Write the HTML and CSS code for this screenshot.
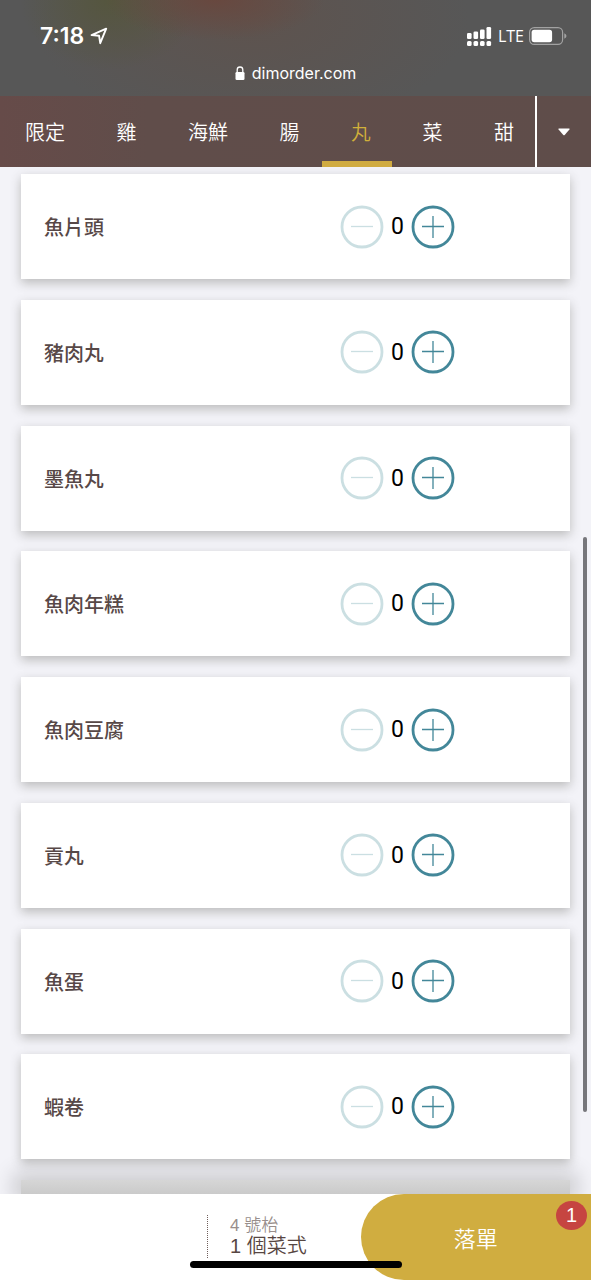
FILE: index.html
```html
<!DOCTYPE html>
<html lang="zh-Hant">
<head>
<meta charset="utf-8">
<meta name="viewport" content="width=device-width, initial-scale=1">
<title>dimorder.com</title>
<link rel="stylesheet" href="styles.css">
</head>
<body>
<div class="screen">
  <header class="browser">
    <div class="status">
      <span class="clock">7:18</span>
      <svg class="locate" width="18" height="18" viewBox="0 0 16 16" aria-hidden="true"><path d="M1.4 7.2 14.4 1.5 9.1 14.4 8.1 7.8Z" fill="none" stroke="#fff" stroke-width="1.7" stroke-linejoin="round"/></svg>
      <svg class="signal" width="25" height="19" viewBox="0 0 25 19" fill="#fff" aria-hidden="true">
        <rect x="0" y="6" width="4.6" height="6" rx="1.3"/><rect x="6.5" y="4.5" width="4.6" height="7.5" rx="1.3"/><rect x="13" y="2.5" width="4.6" height="9.5" rx="1.3"/><rect x="19.5" y="0" width="4.6" height="12" rx="1.3"/>
        <rect x="0" y="14" width="4.6" height="5" rx="1.5"/><rect x="6.5" y="14" width="4.6" height="5" rx="1.5"/><rect x="13" y="14" width="4.6" height="5" rx="1.5"/><rect x="19.5" y="14" width="4.6" height="5" rx="1.5"/>
      </svg>
      <span class="carrier">LTE</span>
      <svg class="battery" width="38" height="18" viewBox="0 0 38 18" aria-hidden="true"><rect x=".6" y=".6" width="33" height="16.8" rx="4.6" fill="none" stroke="#a2a2a2" stroke-width="1.2"/><rect x="2.6" y="2.8" width="20.5" height="12.4" rx="2.6" fill="#fff"/><path d="M35.3 6.2Q37.5 7.2 37.5 9T35.3 11.8Z" fill="#a2a2a2"/></svg>
    </div>
    <div class="address">
      <svg width="10" height="14" viewBox="0 0 10 14" aria-hidden="true"><rect x=".5" y="6" width="9" height="8" rx="1.3" fill="#fff"/><path d="M2.2 6.5V3.8a2.8 2.8 0 0 1 5.6 0v2.7" fill="none" stroke="#fff" stroke-width="1.3"/></svg>
      <span>dimorder.com</span>
    </div>
  </header>

  <nav class="categories">
    <div class="tabs">
      <button class="tab">限定</button><button class="tab">雞</button><button class="tab">海鮮</button><button class="tab">腸</button><button class="tab active" aria-current="true">丸</button><button class="tab">菜</button><button class="tab">甜</button>
    </div>
    <button class="more" aria-label="更多"><svg width="12" height="8" viewBox="0 0 12 8" aria-hidden="true"><path d="M1 .5h10q1 .2.4 1L6.7 7Q6 7.7 5.3 7L.6 1.5Q0 .7 1 .5Z" fill="#fff"/></svg></button>
  </nav>

  <main class="menu">
    <article class="item"><h2>魚片頭</h2><div class="stepper"><button class="minus" aria-label="減少" disabled><svg viewBox="0 0 44 44"><circle cx="22" cy="22" r="20"/><path d="M11 21.5h22"/></svg></button><output>0</output><button class="plus" aria-label="增加"><svg viewBox="0 0 44 44"><circle cx="22" cy="22" r="20"/><path d="M11 21.5h22M22 11v22"/></svg></button></div></article>
    <article class="item"><h2>豬肉丸</h2><div class="stepper"><button class="minus" aria-label="減少" disabled><svg viewBox="0 0 44 44"><circle cx="22" cy="22" r="20"/><path d="M11 21.5h22"/></svg></button><output>0</output><button class="plus" aria-label="增加"><svg viewBox="0 0 44 44"><circle cx="22" cy="22" r="20"/><path d="M11 21.5h22M22 11v22"/></svg></button></div></article>
    <article class="item"><h2>墨魚丸</h2><div class="stepper"><button class="minus" aria-label="減少" disabled><svg viewBox="0 0 44 44"><circle cx="22" cy="22" r="20"/><path d="M11 21.5h22"/></svg></button><output>0</output><button class="plus" aria-label="增加"><svg viewBox="0 0 44 44"><circle cx="22" cy="22" r="20"/><path d="M11 21.5h22M22 11v22"/></svg></button></div></article>
    <article class="item"><h2>魚肉年糕</h2><div class="stepper"><button class="minus" aria-label="減少" disabled><svg viewBox="0 0 44 44"><circle cx="22" cy="22" r="20"/><path d="M11 21.5h22"/></svg></button><output>0</output><button class="plus" aria-label="增加"><svg viewBox="0 0 44 44"><circle cx="22" cy="22" r="20"/><path d="M11 21.5h22M22 11v22"/></svg></button></div></article>
    <article class="item"><h2>魚肉豆腐</h2><div class="stepper"><button class="minus" aria-label="減少" disabled><svg viewBox="0 0 44 44"><circle cx="22" cy="22" r="20"/><path d="M11 21.5h22"/></svg></button><output>0</output><button class="plus" aria-label="增加"><svg viewBox="0 0 44 44"><circle cx="22" cy="22" r="20"/><path d="M11 21.5h22M22 11v22"/></svg></button></div></article>
    <article class="item"><h2>貢丸</h2><div class="stepper"><button class="minus" aria-label="減少" disabled><svg viewBox="0 0 44 44"><circle cx="22" cy="22" r="20"/><path d="M11 21.5h22"/></svg></button><output>0</output><button class="plus" aria-label="增加"><svg viewBox="0 0 44 44"><circle cx="22" cy="22" r="20"/><path d="M11 21.5h22M22 11v22"/></svg></button></div></article>
    <article class="item"><h2>魚蛋</h2><div class="stepper"><button class="minus" aria-label="減少" disabled><svg viewBox="0 0 44 44"><circle cx="22" cy="22" r="20"/><path d="M11 21.5h22"/></svg></button><output>0</output><button class="plus" aria-label="增加"><svg viewBox="0 0 44 44"><circle cx="22" cy="22" r="20"/><path d="M11 21.5h22M22 11v22"/></svg></button></div></article>
    <article class="item"><h2>蝦卷</h2><div class="stepper"><button class="minus" aria-label="減少" disabled><svg viewBox="0 0 44 44"><circle cx="22" cy="22" r="20"/><path d="M11 21.5h22"/></svg></button><output>0</output><button class="plus" aria-label="增加"><svg viewBox="0 0 44 44"><circle cx="22" cy="22" r="20"/><path d="M11 21.5h22M22 11v22"/></svg></button></div></article>
    <div class="peek"></div>
    <div class="scrollbar"></div>
  </main>

  <footer class="order-bar">
    <div class="summary">
      <div class="details"><p class="table-no">4 號枱</p><p class="count">1 個菜式</p></div>
    </div>
    <button class="submit">落單<span class="badge">1</span></button>
    <div class="home"></div>
  </footer>
</div>
</body>
</html>
```
FILE: styles.css
```css
* { box-sizing: border-box; }
body, h2, p { margin: 0; }
body {
  font-family: "Liberation Sans", "Noto Sans CJK TC", sans-serif;
  background: #f3f3f8;
}
button {
  margin: 0;
  padding: 0;
  border: 0;
  background: none;
  color: inherit;
  font: inherit;
}
svg { display: block; }

.screen {
  display: flex;
  flex-direction: column;
  min-height: 100vh;
  overflow: hidden;
}

/* Browser chrome */
.browser {
  height: 96px;
  padding-top: 22px;
  color: #fff;
  font-family: Inter, sans-serif;
  background:
    radial-gradient(ellipse 110px 40px at 215px 0, #68483f, transparent),
    radial-gradient(ellipse 90px 70px at 110px 0, #55563e, transparent),
    radial-gradient(ellipse 220px 110px at 250px 20px, #5e534e, transparent),
    #575757;
}
.status {
  display: flex;
  align-items: center;
  height: 28px;
  padding: 0 24px 0 40px;
}
.clock { font-size: 23px; font-weight: 600; }
.locate { margin-left: 6px; }
.signal { margin-left: auto; }
.carrier {
  margin: 0 5px 0 6px;
  font-family: "Open Sans", sans-serif;
  font-size: 16px;
  font-weight: 500;
}
.address {
  display: flex;
  align-items: center;
  justify-content: center;
  gap: 7px;
  height: 24px;
  margin-top: 11px;
  font-size: 16px;
}

/* Category tabs */
.categories {
  display: flex;
  height: 71px;
  background: linear-gradient(90deg, #664b49, #604d4a 25%, #5f4d4a);
  color: #fff;
}
.tabs {
  display: flex;
  flex: 1;
  justify-content: space-between;
  margin-left: -4px;
}
.tab {
  padding: 0 21px 0 29px;
  border-bottom: 6px solid transparent;
  border-top: 6px solid transparent;
  font-size: 20px;
  font-weight: 350;
  white-space: nowrap;
}
.tab.active {
  border-bottom-color: #d0ab41;
  color: #d0b03a;
}
.more {
  display: flex;
  align-items: center;
  justify-content: center;
  width: 56px;
  border-left: 2px solid #fff;
}

/* Dishes */
.menu {
  position: relative;
  display: flex;
  flex: 1;
  flex-direction: column;
  justify-content: space-between;
  padding: 7px 21px 0;
}
.item {
  position: relative;
  z-index: 1;
  display: grid;
  grid-template-columns: 1fr 230px;
  align-items: center;
  height: 105px;
  padding-left: 23px;
  background: #fff;
  box-shadow: 0 4px 10px rgba(60, 60, 50, .3);
}
.item h2 {
  color: #574847;
  font-size: 20px;
  font-weight: 500;
}
.stepper {
  display: grid;
  grid-template-columns: 44px 27px 44px;
  align-items: center;
  color: #000;
}
.stepper output {
  font-family: Roboto, sans-serif;
  font-size: 23px;
  text-align: center;
}
.stepper svg {
  width: 44px;
  height: 44px;
  fill: none;
  stroke: currentColor;
  stroke-width: 2.8;
}
.stepper path { stroke-width: 1.3; }
.minus { color: #cbdfe2; }
.plus { color: #438799; }
.peek {
  height: 14px;
  background: linear-gradient(#d6d6d6, #cacaca);
  box-shadow: 0 0 20px 8px rgba(0, 0, 0, .16);
}
.scrollbar {
  position: absolute;
  z-index: 2;
  top: 36%;
  right: 4px;
  width: 4px;
  height: 56%;
  border-radius: 2px;
  background: #77777b;
}

/* Order bar */
.order-bar {
  position: relative;
  z-index: 3;
  display: flex;
  height: 86px;
  background: #fff;
}
.summary {
  flex: 1;
  padding: 21px 0 0 207px;
}
.details {
  height: 43px;
  padding-left: 22px;
  border-left: 1px dotted #705f5c;
  white-space: nowrap;
}
.table-no {
  color: #998f8c;
  font-size: 17px;
  font-weight: 350;
  line-height: 21px;
}
.count {
  color: #574642;
  font-size: 20px;
  font-weight: 350;
  line-height: 21px;
}
.submit {
  position: relative;
  width: 39%;
  border-radius: 43px 0 0 43px;
  background: #d0ad40;
  color: #fff;
  font-size: 22px;
  font-weight: 350;
}
.badge {
  position: absolute;
  top: 7px;
  right: 4px;
  width: 31px;
  height: 29px;
  border-radius: 50%;
  background: #c64541;
  font-size: 20px;
  line-height: 29px;
}
.home {
  position: absolute;
  bottom: 12px;
  left: 50%;
  width: 212px;
  height: 7px;
  border-radius: 4px;
  background: #000;
  transform: translateX(-50%);
}
```
